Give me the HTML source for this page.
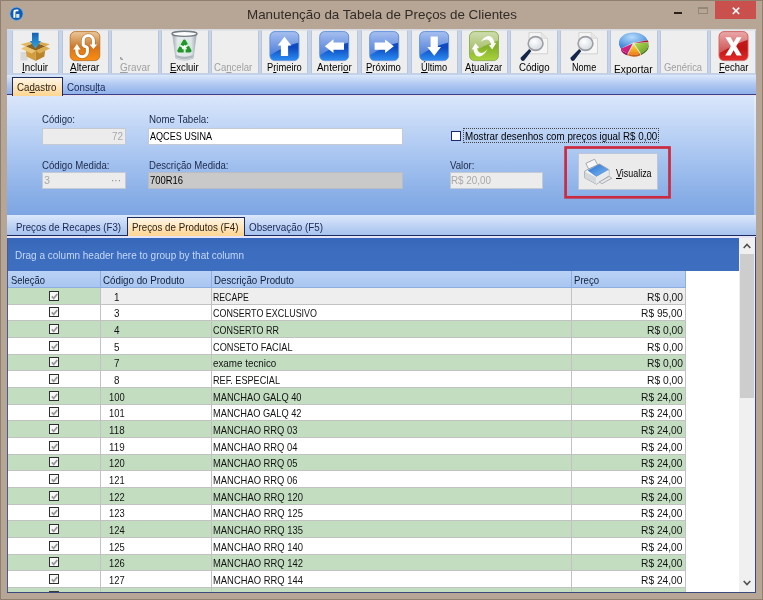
<!DOCTYPE html><html><head><meta charset="utf-8"><title>Manutenção da Tabela de Preços de Clientes</title><style>
html,body{margin:0;padding:0}
body{width:763px;height:600px;overflow:hidden;position:relative;background:#b7a696;font-family:"Liberation Sans",sans-serif;font-size:10.5px}
#w{position:absolute;left:0;top:0;width:763px;height:600px;will-change:transform;filter:blur(.4px)}
.a{position:absolute}
.t{position:absolute;white-space:pre;line-height:14px;height:14px;transform-origin:0 50%}
u{text-decoration:underline;text-underline-offset:.5px;text-decoration-thickness:1px}
svg{position:absolute;overflow:visible}
</style></head><body><div id="w"><div class="a" style="left:0px;top:0px;width:763px;height:600px;box-sizing:border-box;border:1px solid #8e7f6e"></div><span class="t" style="left:246.5px;top:8.3px;font-size:13.6px;color:#322c26;transform:scaleX(0.9851);">Manutenção da Tabela de Preços de Clientes</span><svg style="left:0;top:0" width="30" height="28" viewBox="0 0 30 28"><circle cx="16.5" cy="13.8" r="6.6" fill="#0d5db6" stroke="#7fb2e4" stroke-opacity=".7" stroke-width="1"/><path d="M13.4 17.8V12Q13.4 9.6 16.2 9.6H18.4V11.3H16.4Q15.4 11.3 15.4 12.4V17.8z" fill="#fff"/><rect x="16.2" y="14" width="3.2" height="3.8" fill="#d2e8fa"/></svg><div class="a" style="left:674px;top:12px;width:8px;height:2px;background:#2b2118"></div><div class="a" style="left:698px;top:7px;width:10px;height:7px;box-sizing:border-box;border:1px solid #93877a;border-top-width:2px"></div><div class="a" style="left:715px;top:1px;width:41px;height:18px;background:#c9504d"></div><svg style="left:732px;top:7px" width="8" height="8" viewBox="0 0 8 8"><path d="M0.8 0.6L7.2 7M7.2 0.6L0.8 7" stroke="#fff" stroke-width="1.5"/></svg><div class="a" style="left:7px;top:29px;width:749px;height:46px;background:linear-gradient(#c8d4e8,#c2d2ec)"></div><div class="a" style="left:7px;top:29px;width:749px;height:1px;background:#d9dbe0"></div><div class="a" style="left:12px;top:30px;width:47px;height:44px;box-sizing:border-box;background:#eeeeee;border:1px solid #b9c5d8;border-top-color:#e2e4e8;border-bottom-color:#c6d0e0"></div><span class="t" style="left:21.7px;top:61.2px;font-size:10.2px;color:#000;transform:scaleX(0.9594);"><u>I</u>ncluir</span><div class="a" style="left:62px;top:30px;width:47px;height:44px;box-sizing:border-box;background:#eeeeee;border:1px solid #b9c5d8;border-top-color:#e2e4e8;border-bottom-color:#c6d0e0"></div><span class="t" style="left:70.2px;top:61.2px;font-size:10.2px;color:#000;transform:scaleX(0.9795);"><u>A</u>lterar</span><div class="a" style="left:111px;top:30px;width:48px;height:44px;box-sizing:border-box;background:#eeeeee;border:1px solid #b9c5d8;border-top-color:#e2e4e8;border-bottom-color:#c6d0e0"></div><span class="t" style="left:119.6px;top:61.2px;font-size:10.2px;color:#a0a0a0;transform:scaleX(0.9725);"><u>G</u>ravar</span><div class="a" style="left:161px;top:30px;width:48px;height:44px;box-sizing:border-box;background:#eeeeee;border:1px solid #b9c5d8;border-top-color:#e2e4e8;border-bottom-color:#c6d0e0"></div><span class="t" style="left:170.0px;top:61.2px;font-size:10.2px;color:#000;transform:scaleX(0.9353);"><u>E</u>xcluir</span><div class="a" style="left:211px;top:30px;width:48px;height:44px;box-sizing:border-box;background:#eeeeee;border:1px solid #b9c5d8;border-top-color:#e2e4e8;border-bottom-color:#c6d0e0"></div><span class="t" style="left:214.3px;top:61.2px;font-size:10.2px;color:#a0a0a0;transform:scaleX(0.9388);">Ca<u>n</u>celar</span><div class="a" style="left:261px;top:30px;width:47px;height:44px;box-sizing:border-box;background:#eeeeee;border:1px solid #b9c5d8;border-top-color:#e2e4e8;border-bottom-color:#c6d0e0"></div><span class="t" style="left:266.6px;top:61.2px;font-size:10.2px;color:#000;transform:scaleX(0.9169);">P<u>r</u>imeiro</span><div class="a" style="left:311px;top:30px;width:47px;height:44px;box-sizing:border-box;background:#eeeeee;border:1px solid #b9c5d8;border-top-color:#e2e4e8;border-bottom-color:#c6d0e0"></div><span class="t" style="left:317.0px;top:61.2px;font-size:10.2px;color:#000;transform:scaleX(0.9747);">Anteri<u>o</u>r</span><div class="a" style="left:361px;top:30px;width:47px;height:44px;box-sizing:border-box;background:#eeeeee;border:1px solid #b9c5d8;border-top-color:#e2e4e8;border-bottom-color:#c6d0e0"></div><span class="t" style="left:366.0px;top:61.2px;font-size:10.2px;color:#000;transform:scaleX(0.9338);"><u>P</u>róximo</span><div class="a" style="left:411px;top:30px;width:47px;height:44px;box-sizing:border-box;background:#eeeeee;border:1px solid #b9c5d8;border-top-color:#e2e4e8;border-bottom-color:#c6d0e0"></div><span class="t" style="left:420.8px;top:61.2px;font-size:10.2px;color:#000;transform:scaleX(0.9074);"><u>Ú</u>ltimo</span><div class="a" style="left:461px;top:30px;width:47px;height:44px;box-sizing:border-box;background:#eeeeee;border:1px solid #b9c5d8;border-top-color:#e2e4e8;border-bottom-color:#c6d0e0"></div><span class="t" style="left:464.5px;top:61.2px;font-size:10.2px;color:#000;transform:scaleX(0.9406);">A<u>t</u>ualizar</span><div class="a" style="left:510px;top:30px;width:48px;height:44px;box-sizing:border-box;background:#eeeeee;border:1px solid #b9c5d8;border-top-color:#e2e4e8;border-bottom-color:#c6d0e0"></div><span class="t" style="left:518.5px;top:61.2px;font-size:10.2px;color:#000;transform:scaleX(0.9475);">Código</span><div class="a" style="left:560px;top:30px;width:48px;height:44px;box-sizing:border-box;background:#eeeeee;border:1px solid #b9c5d8;border-top-color:#e2e4e8;border-bottom-color:#c6d0e0"></div><span class="t" style="left:571.5px;top:61.2px;font-size:10.2px;color:#000;transform:scaleX(0.8901);">Nome</span><div class="a" style="left:610px;top:30px;width:48px;height:44px;box-sizing:border-box;background:#eeeeee;border:1px solid #b9c5d8;border-top-color:#e2e4e8;border-bottom-color:#c6d0e0"></div><span class="t" style="left:613.6px;top:63.1px;font-size:10.2px;color:#000;transform:scaleX(1.0022);">Exportar</span><div class="a" style="left:660px;top:30px;width:48px;height:44px;box-sizing:border-box;background:#eeeeee;border:1px solid #b9c5d8;border-top-color:#e2e4e8;border-bottom-color:#c6d0e0"></div><span class="t" style="left:663.9px;top:61.2px;font-size:10.2px;color:#a0a0a0;transform:scaleX(0.9215);">Genérica</span><div class="a" style="left:710px;top:30px;width:46px;height:44px;box-sizing:border-box;background:#eeeeee;border:1px solid #b9c5d8;border-top-color:#e2e4e8;border-bottom-color:#c6d0e0"></div><span class="t" style="left:718.7px;top:61.2px;font-size:10.2px;color:#000;transform:scaleX(0.9237);"><u>F</u>echar</span><div class="a" style="left:7px;top:75px;width:749px;height:19px;background:linear-gradient(#dce8fb,#b4cbf3 45%,#8fb1ea)"></div><div class="a" style="left:7px;top:94px;width:749px;height:1px;background:#36408a"></div><span class="t" style="left:67.0px;top:80.6px;font-size:10.2px;color:#1a2654;transform:scaleX(0.9573);">Consu<u>l</u>ta</span><div class="a" style="left:7px;top:95px;width:749px;height:120px;background:linear-gradient(#dbe7fb,#c1d6f6 26%,#a7c4f0 52%,#8fb3e9 77%,#7da5e2)"></div><div class="a" style="left:7px;top:95px;width:749px;height:1px;background:#eadfe8"></div><div class="a" style="left:12px;top:77px;width:51px;height:19px;box-sizing:border-box;border:1px solid #1c2a5e;border-bottom:none;background:linear-gradient(#fff6e6,#ffd591)"></div><span class="t" style="left:17.0px;top:80.6px;font-size:10.2px;color:#2a2418;transform:scaleX(0.9550);">Ca<u>d</u>astro</span><span class="t" style="left:42.0px;top:113.0px;font-size:10.2px;color:#1c2a4a;transform:scaleX(0.9395);">Código:</span><span class="t" style="left:148.5px;top:113.0px;font-size:10.2px;color:#1c2a4a;transform:scaleX(0.9574);">Nome Tabela:</span><span class="t" style="left:42.0px;top:158.5px;font-size:10.2px;color:#1c2a4a;transform:scaleX(0.9459);">Código Medida:</span><span class="t" style="left:148.5px;top:158.5px;font-size:10.2px;color:#1c2a4a;transform:scaleX(0.9422);">Descrição Medida:</span><span class="t" style="left:450.0px;top:158.5px;font-size:10.2px;color:#1c2a4a;transform:scaleX(0.9474);">Valor:</span><div class="a" style="left:42px;top:128px;width:84px;height:17px;box-sizing:border-box;background:#ececec;border:1px solid #c4cad4"></div><span class="t" style="left:112.0px;top:130.2px;font-size:10.2px;color:#a8a8a8;transform:scaleX(0.9697);">72</span><div class="a" style="left:148px;top:128px;width:255px;height:17px;box-sizing:border-box;background:#fff;border:1px solid #c4cad4"></div><span class="t" style="left:150.0px;top:130.1px;font-size:10.2px;color:#000;transform:scaleX(0.8903);">AQCES USINA</span><div class="a" style="left:42px;top:172px;width:84px;height:17px;box-sizing:border-box;background:#ececec;border:1px solid #c4cad4"></div><span class="t" style="left:44.0px;top:174.3px;font-size:10.2px;color:#a8a8a8;transform:scaleX(1.0579);">3</span><span class="t" style="left:111.0px;top:173.9px;font-size:10.2px;color:#8a8a8a;transform:scaleX(0.9816);">···</span><div class="a" style="left:148px;top:172px;width:255px;height:17px;box-sizing:border-box;background:#c9c9c9;border:1px solid #b8bcc4"></div><span class="t" style="left:150.0px;top:174.3px;font-size:10.2px;color:#000;transform:scaleX(0.9247);">700R16</span><div class="a" style="left:450px;top:172px;width:93px;height:17px;box-sizing:border-box;background:#ececec;border:1px solid #c4cad4"></div><span class="t" style="left:451.0px;top:174.3px;font-size:10.2px;color:#a8a8a8;transform:scaleX(0.9671);">R$ 20,00</span><div class="a" style="left:451px;top:131px;width:10px;height:10px;box-sizing:border-box;background:#fff;border:1px solid #1c2a6a"></div><div class="a" style="left:463px;top:128px;width:196px;height:15px;box-sizing:border-box;border:1px dotted #444"></div><span class="t" style="left:464.5px;top:130.3px;font-size:10.2px;color:#000;transform:scaleX(0.9620);">Mostrar desenhos com preços igual R$ 0,00</span><svg style="left:0;top:0" width="763" height="220" viewBox="0 0 763 220"><rect x="565.6" y="147.5" width="103.9" height="49.8" fill="none" stroke="#cb2a40" stroke-width="2.7"/></svg><div class="a" style="left:578px;top:153px;width:80px;height:37px;box-sizing:border-box;background:#ebebeb;border:1px solid #bcc6d8"></div><span class="t" style="left:616.3px;top:166.8px;font-size:10.2px;color:#000;transform:scaleX(0.8766);"><u>V</u>isualiza</span><div class="a" style="left:754px;top:96px;width:2px;height:119px;background:rgba(255,255,255,.3)"></div><div class="a" style="left:7px;top:215px;width:749px;height:20px;background:linear-gradient(#dbe7fb,#a6c2ee)"></div><div class="a" style="left:7px;top:235px;width:749px;height:1px;background:#1c2a5e"></div><div class="a" style="left:7px;top:236px;width:749px;height:2px;background:#e4e4f8"></div><div class="a" style="left:127px;top:217px;width:118px;height:19px;box-sizing:border-box;border:1px solid #1c2a5e;border-bottom:none;background:linear-gradient(#fff6e6,#ffd591)"></div><span class="t" style="left:16.0px;top:220.9px;font-size:10.2px;color:#1a2654;transform:scaleX(0.9509);">Preços de Recapes (F3)</span><span class="t" style="left:132.2px;top:220.9px;font-size:10.2px;color:#2a2418;transform:scaleX(0.9587);">Preços de Produtos (F4)</span><span class="t" style="left:249.0px;top:220.9px;font-size:10.2px;color:#1a2654;transform:scaleX(0.9681);">Observação (F5)</span><div class="a" style="left:7px;top:238px;width:749px;height:355px;background:#fff"></div><div class="a" style="left:7px;top:238px;width:732px;height:33px;background:linear-gradient(#3766b8,#3c6dbf 40%,#3d6ec0)"></div><span class="t" style="left:15.0px;top:248.9px;font-size:10.2px;color:#c5d8f8;transform:scaleX(0.9815);">Drag a column header here to group by that column</span><div class="a" style="left:7px;top:271px;width:94px;height:17px;box-sizing:border-box;background:linear-gradient(#b9d1f5,#a9c6f1);border-right:1px solid #8eaee0;border-bottom:1px solid #8eaee0"></div><span class="t" style="left:10.5px;top:273.9px;font-size:10.2px;color:#10203a;transform:scaleX(0.9232);">Seleção</span><div class="a" style="left:101px;top:271px;width:111px;height:17px;box-sizing:border-box;background:linear-gradient(#b9d1f5,#a9c6f1);border-right:1px solid #8eaee0;border-bottom:1px solid #8eaee0"></div><span class="t" style="left:103.0px;top:273.9px;font-size:10.2px;color:#10203a;transform:scaleX(0.9592);">Código do Produto</span><div class="a" style="left:212px;top:271px;width:360px;height:17px;box-sizing:border-box;background:linear-gradient(#b9d1f5,#a9c6f1);border-right:1px solid #8eaee0;border-bottom:1px solid #8eaee0"></div><span class="t" style="left:213.5px;top:273.9px;font-size:10.2px;color:#10203a;transform:scaleX(0.9545);">Descrição Produto</span><div class="a" style="left:572px;top:271px;width:114px;height:17px;box-sizing:border-box;background:linear-gradient(#b9d1f5,#a9c6f1);border-right:1px solid #8eaee0;border-bottom:1px solid #8eaee0"></div><span class="t" style="left:574.0px;top:273.9px;font-size:10.2px;color:#10203a;transform:scaleX(0.9390);">Preço</span><div class="a" style="left:7px;top:288px;width:679px;height:17px;background:#c3ddc1"></div><div class="a" style="left:101px;top:288px;width:585px;height:17px;background:#eeeeee"></div><div class="a" style="left:7px;top:304px;width:679px;height:1px;background:#c2c2c2"></div><div class="a" style="left:49px;top:291px;width:10px;height:10px;box-sizing:border-box;border:1px solid #2e2e2e;background:#f8f8f8"></div><svg style="left:50.5px;top:293px" width="7" height="7" viewBox="0 0 7 7"><path d="M0.8 3.4L2.7 5.4L6.3 1" stroke="#989898" stroke-width="1.7" fill="none"/></svg><span class="t" style="left:114.0px;top:290.7px;font-size:10.2px;color:#141414;transform:scaleX(0.9697);">1</span><span class="t" style="left:212.8px;top:290.7px;font-size:10.2px;color:#141414;transform:scaleX(0.8543);">RECAPE</span><span class="t" style="left:646.8px;top:290.7px;font-size:10.2px;color:#141414;transform:scaleX(1.0088);">R$ 0,00</span><div class="a" style="left:7px;top:305px;width:679px;height:16px;background:#fff"></div><div class="a" style="left:7px;top:320px;width:679px;height:1px;background:#c2c2c2"></div><div class="a" style="left:49px;top:307px;width:10px;height:10px;box-sizing:border-box;border:1px solid #2e2e2e;background:#f8f8f8"></div><svg style="left:50.5px;top:309px" width="7" height="7" viewBox="0 0 7 7"><path d="M0.8 3.4L2.7 5.4L6.3 1" stroke="#989898" stroke-width="1.7" fill="none"/></svg><span class="t" style="left:114.0px;top:307.4px;font-size:10.2px;color:#141414;transform:scaleX(0.9697);">3</span><span class="t" style="left:212.8px;top:307.4px;font-size:10.2px;color:#141414;transform:scaleX(0.8775);">CONSERTO EXCLUSIVO</span><span class="t" style="left:641.3px;top:307.4px;font-size:10.2px;color:#141414;transform:scaleX(1.0034);">R$ 95,00</span><div class="a" style="left:7px;top:321px;width:679px;height:17px;background:#c3ddc1"></div><div class="a" style="left:7px;top:337px;width:679px;height:1px;background:#c2c2c2"></div><div class="a" style="left:49px;top:324px;width:10px;height:10px;box-sizing:border-box;border:1px solid #2e2e2e;background:#f8f8f8"></div><svg style="left:50.5px;top:326px" width="7" height="7" viewBox="0 0 7 7"><path d="M0.8 3.4L2.7 5.4L6.3 1" stroke="#989898" stroke-width="1.7" fill="none"/></svg><span class="t" style="left:114.0px;top:324.0px;font-size:10.2px;color:#141414;transform:scaleX(0.9697);">4</span><span class="t" style="left:212.8px;top:324.0px;font-size:10.2px;color:#141414;transform:scaleX(0.8809);">CONSERTO RR</span><span class="t" style="left:646.8px;top:324.0px;font-size:10.2px;color:#141414;transform:scaleX(1.0088);">R$ 0,00</span><div class="a" style="left:7px;top:338px;width:679px;height:17px;background:#fff"></div><div class="a" style="left:7px;top:354px;width:679px;height:1px;background:#c2c2c2"></div><div class="a" style="left:49px;top:341px;width:10px;height:10px;box-sizing:border-box;border:1px solid #2e2e2e;background:#f8f8f8"></div><svg style="left:50.5px;top:343px" width="7" height="7" viewBox="0 0 7 7"><path d="M0.8 3.4L2.7 5.4L6.3 1" stroke="#989898" stroke-width="1.7" fill="none"/></svg><span class="t" style="left:114.0px;top:340.7px;font-size:10.2px;color:#141414;transform:scaleX(0.9697);">5</span><span class="t" style="left:212.8px;top:340.7px;font-size:10.2px;color:#141414;transform:scaleX(0.9021);">CONSETO FACIAL</span><span class="t" style="left:646.8px;top:340.7px;font-size:10.2px;color:#141414;transform:scaleX(1.0088);">R$ 0,00</span><div class="a" style="left:7px;top:355px;width:679px;height:16px;background:#c3ddc1"></div><div class="a" style="left:7px;top:370px;width:679px;height:1px;background:#c2c2c2"></div><div class="a" style="left:49px;top:357px;width:10px;height:10px;box-sizing:border-box;border:1px solid #2e2e2e;background:#f8f8f8"></div><svg style="left:50.5px;top:359px" width="7" height="7" viewBox="0 0 7 7"><path d="M0.8 3.4L2.7 5.4L6.3 1" stroke="#989898" stroke-width="1.7" fill="none"/></svg><span class="t" style="left:114.0px;top:357.4px;font-size:10.2px;color:#141414;transform:scaleX(0.9697);">7</span><span class="t" style="left:212.8px;top:357.4px;font-size:10.2px;color:#141414;transform:scaleX(0.9637);">exame tecnico</span><span class="t" style="left:646.8px;top:357.4px;font-size:10.2px;color:#141414;transform:scaleX(1.0088);">R$ 0,00</span><div class="a" style="left:7px;top:371px;width:679px;height:17px;background:#fff"></div><div class="a" style="left:7px;top:387px;width:679px;height:1px;background:#c2c2c2"></div><div class="a" style="left:49px;top:374px;width:10px;height:10px;box-sizing:border-box;border:1px solid #2e2e2e;background:#f8f8f8"></div><svg style="left:50.5px;top:376px" width="7" height="7" viewBox="0 0 7 7"><path d="M0.8 3.4L2.7 5.4L6.3 1" stroke="#989898" stroke-width="1.7" fill="none"/></svg><span class="t" style="left:114.0px;top:374.0px;font-size:10.2px;color:#141414;transform:scaleX(0.9697);">8</span><span class="t" style="left:212.8px;top:374.0px;font-size:10.2px;color:#141414;transform:scaleX(0.8965);">REF. ESPECIAL</span><span class="t" style="left:646.8px;top:374.0px;font-size:10.2px;color:#141414;transform:scaleX(1.0088);">R$ 0,00</span><div class="a" style="left:7px;top:388px;width:679px;height:17px;background:#c3ddc1"></div><div class="a" style="left:7px;top:404px;width:679px;height:1px;background:#c2c2c2"></div><div class="a" style="left:49px;top:391px;width:10px;height:10px;box-sizing:border-box;border:1px solid #2e2e2e;background:#f8f8f8"></div><svg style="left:50.5px;top:393px" width="7" height="7" viewBox="0 0 7 7"><path d="M0.8 3.4L2.7 5.4L6.3 1" stroke="#989898" stroke-width="1.7" fill="none"/></svg><span class="t" style="left:108.9px;top:390.7px;font-size:10.2px;color:#141414;transform:scaleX(0.9176);">100</span><span class="t" style="left:212.8px;top:390.7px;font-size:10.2px;color:#141414;transform:scaleX(0.9089);">MANCHAO GALQ 40</span><span class="t" style="left:641.3px;top:390.7px;font-size:10.2px;color:#141414;transform:scaleX(1.0034);">R$ 24,00</span><div class="a" style="left:7px;top:405px;width:679px;height:16px;background:#fff"></div><div class="a" style="left:7px;top:420px;width:679px;height:1px;background:#c2c2c2"></div><div class="a" style="left:49px;top:407px;width:10px;height:10px;box-sizing:border-box;border:1px solid #2e2e2e;background:#f8f8f8"></div><svg style="left:50.5px;top:409px" width="7" height="7" viewBox="0 0 7 7"><path d="M0.8 3.4L2.7 5.4L6.3 1" stroke="#989898" stroke-width="1.7" fill="none"/></svg><span class="t" style="left:108.9px;top:407.3px;font-size:10.2px;color:#141414;transform:scaleX(0.9176);">101</span><span class="t" style="left:212.8px;top:407.3px;font-size:10.2px;color:#141414;transform:scaleX(0.9089);">MANCHAO GALQ 42</span><span class="t" style="left:641.3px;top:407.3px;font-size:10.2px;color:#141414;transform:scaleX(1.0034);">R$ 24,00</span><div class="a" style="left:7px;top:421px;width:679px;height:17px;background:#c3ddc1"></div><div class="a" style="left:7px;top:437px;width:679px;height:1px;background:#c2c2c2"></div><div class="a" style="left:49px;top:424px;width:10px;height:10px;box-sizing:border-box;border:1px solid #2e2e2e;background:#f8f8f8"></div><svg style="left:50.5px;top:426px" width="7" height="7" viewBox="0 0 7 7"><path d="M0.8 3.4L2.7 5.4L6.3 1" stroke="#989898" stroke-width="1.7" fill="none"/></svg><span class="t" style="left:108.9px;top:424.0px;font-size:10.2px;color:#141414;transform:scaleX(0.9600);">118</span><span class="t" style="left:212.8px;top:424.0px;font-size:10.2px;color:#141414;transform:scaleX(0.9204);">MANCHAO RRQ 03</span><span class="t" style="left:641.3px;top:424.0px;font-size:10.2px;color:#141414;transform:scaleX(1.0034);">R$ 24,00</span><div class="a" style="left:7px;top:438px;width:679px;height:17px;background:#fff"></div><div class="a" style="left:7px;top:454px;width:679px;height:1px;background:#c2c2c2"></div><div class="a" style="left:49px;top:441px;width:10px;height:10px;box-sizing:border-box;border:1px solid #2e2e2e;background:#f8f8f8"></div><svg style="left:50.5px;top:443px" width="7" height="7" viewBox="0 0 7 7"><path d="M0.8 3.4L2.7 5.4L6.3 1" stroke="#989898" stroke-width="1.7" fill="none"/></svg><span class="t" style="left:108.9px;top:440.7px;font-size:10.2px;color:#141414;transform:scaleX(0.9600);">119</span><span class="t" style="left:212.8px;top:440.7px;font-size:10.2px;color:#141414;transform:scaleX(0.9204);">MANCHAO RRQ 04</span><span class="t" style="left:641.3px;top:440.7px;font-size:10.2px;color:#141414;transform:scaleX(1.0034);">R$ 24,00</span><div class="a" style="left:7px;top:455px;width:679px;height:16px;background:#c3ddc1"></div><div class="a" style="left:7px;top:470px;width:679px;height:1px;background:#c2c2c2"></div><div class="a" style="left:49px;top:457px;width:10px;height:10px;box-sizing:border-box;border:1px solid #2e2e2e;background:#f8f8f8"></div><svg style="left:50.5px;top:459px" width="7" height="7" viewBox="0 0 7 7"><path d="M0.8 3.4L2.7 5.4L6.3 1" stroke="#989898" stroke-width="1.7" fill="none"/></svg><span class="t" style="left:108.9px;top:457.3px;font-size:10.2px;color:#141414;transform:scaleX(0.9176);">120</span><span class="t" style="left:212.8px;top:457.3px;font-size:10.2px;color:#141414;transform:scaleX(0.9204);">MANCHAO RRQ 05</span><span class="t" style="left:641.3px;top:457.3px;font-size:10.2px;color:#141414;transform:scaleX(1.0034);">R$ 24,00</span><div class="a" style="left:7px;top:471px;width:679px;height:17px;background:#fff"></div><div class="a" style="left:7px;top:487px;width:679px;height:1px;background:#c2c2c2"></div><div class="a" style="left:49px;top:474px;width:10px;height:10px;box-sizing:border-box;border:1px solid #2e2e2e;background:#f8f8f8"></div><svg style="left:50.5px;top:476px" width="7" height="7" viewBox="0 0 7 7"><path d="M0.8 3.4L2.7 5.4L6.3 1" stroke="#989898" stroke-width="1.7" fill="none"/></svg><span class="t" style="left:108.9px;top:474.0px;font-size:10.2px;color:#141414;transform:scaleX(0.9176);">121</span><span class="t" style="left:212.8px;top:474.0px;font-size:10.2px;color:#141414;transform:scaleX(0.9204);">MANCHAO RRQ 06</span><span class="t" style="left:641.3px;top:474.0px;font-size:10.2px;color:#141414;transform:scaleX(1.0034);">R$ 24,00</span><div class="a" style="left:7px;top:488px;width:679px;height:17px;background:#c3ddc1"></div><div class="a" style="left:7px;top:504px;width:679px;height:1px;background:#c2c2c2"></div><div class="a" style="left:49px;top:491px;width:10px;height:10px;box-sizing:border-box;border:1px solid #2e2e2e;background:#f8f8f8"></div><svg style="left:50.5px;top:493px" width="7" height="7" viewBox="0 0 7 7"><path d="M0.8 3.4L2.7 5.4L6.3 1" stroke="#989898" stroke-width="1.7" fill="none"/></svg><span class="t" style="left:108.9px;top:490.6px;font-size:10.2px;color:#141414;transform:scaleX(0.9176);">122</span><span class="t" style="left:212.8px;top:490.6px;font-size:10.2px;color:#141414;transform:scaleX(0.9243);">MANCHAO RRQ 120</span><span class="t" style="left:641.3px;top:490.6px;font-size:10.2px;color:#141414;transform:scaleX(1.0034);">R$ 24,00</span><div class="a" style="left:7px;top:505px;width:679px;height:16px;background:#fff"></div><div class="a" style="left:7px;top:520px;width:679px;height:1px;background:#c2c2c2"></div><div class="a" style="left:49px;top:507px;width:10px;height:10px;box-sizing:border-box;border:1px solid #2e2e2e;background:#f8f8f8"></div><svg style="left:50.5px;top:509px" width="7" height="7" viewBox="0 0 7 7"><path d="M0.8 3.4L2.7 5.4L6.3 1" stroke="#989898" stroke-width="1.7" fill="none"/></svg><span class="t" style="left:108.9px;top:507.3px;font-size:10.2px;color:#141414;transform:scaleX(0.9176);">123</span><span class="t" style="left:212.8px;top:507.3px;font-size:10.2px;color:#141414;transform:scaleX(0.9243);">MANCHAO RRQ 125</span><span class="t" style="left:641.3px;top:507.3px;font-size:10.2px;color:#141414;transform:scaleX(1.0034);">R$ 24,00</span><div class="a" style="left:7px;top:521px;width:679px;height:17px;background:#c3ddc1"></div><div class="a" style="left:7px;top:537px;width:679px;height:1px;background:#c2c2c2"></div><div class="a" style="left:49px;top:524px;width:10px;height:10px;box-sizing:border-box;border:1px solid #2e2e2e;background:#f8f8f8"></div><svg style="left:50.5px;top:526px" width="7" height="7" viewBox="0 0 7 7"><path d="M0.8 3.4L2.7 5.4L6.3 1" stroke="#989898" stroke-width="1.7" fill="none"/></svg><span class="t" style="left:108.9px;top:524.0px;font-size:10.2px;color:#141414;transform:scaleX(0.9176);">124</span><span class="t" style="left:212.8px;top:524.0px;font-size:10.2px;color:#141414;transform:scaleX(0.9243);">MANCHAO RRQ 135</span><span class="t" style="left:641.3px;top:524.0px;font-size:10.2px;color:#141414;transform:scaleX(1.0034);">R$ 24,00</span><div class="a" style="left:7px;top:538px;width:679px;height:17px;background:#fff"></div><div class="a" style="left:7px;top:554px;width:679px;height:1px;background:#c2c2c2"></div><div class="a" style="left:49px;top:541px;width:10px;height:10px;box-sizing:border-box;border:1px solid #2e2e2e;background:#f8f8f8"></div><svg style="left:50.5px;top:543px" width="7" height="7" viewBox="0 0 7 7"><path d="M0.8 3.4L2.7 5.4L6.3 1" stroke="#989898" stroke-width="1.7" fill="none"/></svg><span class="t" style="left:108.9px;top:540.6px;font-size:10.2px;color:#141414;transform:scaleX(0.9176);">125</span><span class="t" style="left:212.8px;top:540.6px;font-size:10.2px;color:#141414;transform:scaleX(0.9243);">MANCHAO RRQ 140</span><span class="t" style="left:641.3px;top:540.6px;font-size:10.2px;color:#141414;transform:scaleX(1.0034);">R$ 24,00</span><div class="a" style="left:7px;top:555px;width:679px;height:16px;background:#c3ddc1"></div><div class="a" style="left:7px;top:570px;width:679px;height:1px;background:#c2c2c2"></div><div class="a" style="left:49px;top:557px;width:10px;height:10px;box-sizing:border-box;border:1px solid #2e2e2e;background:#f8f8f8"></div><svg style="left:50.5px;top:559px" width="7" height="7" viewBox="0 0 7 7"><path d="M0.8 3.4L2.7 5.4L6.3 1" stroke="#989898" stroke-width="1.7" fill="none"/></svg><span class="t" style="left:108.9px;top:557.3px;font-size:10.2px;color:#141414;transform:scaleX(0.9176);">126</span><span class="t" style="left:212.8px;top:557.3px;font-size:10.2px;color:#141414;transform:scaleX(0.9243);">MANCHAO RRQ 142</span><span class="t" style="left:641.3px;top:557.3px;font-size:10.2px;color:#141414;transform:scaleX(1.0034);">R$ 24,00</span><div class="a" style="left:7px;top:571px;width:679px;height:17px;background:#fff"></div><div class="a" style="left:7px;top:587px;width:679px;height:1px;background:#c2c2c2"></div><div class="a" style="left:49px;top:574px;width:10px;height:10px;box-sizing:border-box;border:1px solid #2e2e2e;background:#f8f8f8"></div><svg style="left:50.5px;top:576px" width="7" height="7" viewBox="0 0 7 7"><path d="M0.8 3.4L2.7 5.4L6.3 1" stroke="#989898" stroke-width="1.7" fill="none"/></svg><span class="t" style="left:108.9px;top:574.0px;font-size:10.2px;color:#141414;transform:scaleX(0.9176);">127</span><span class="t" style="left:212.8px;top:574.0px;font-size:10.2px;color:#141414;transform:scaleX(0.9243);">MANCHAO RRQ 144</span><span class="t" style="left:641.3px;top:574.0px;font-size:10.2px;color:#141414;transform:scaleX(1.0034);">R$ 24,00</span><div class="a" style="left:7px;top:588px;width:679px;height:4px;background:#c3ddc1"></div><div class="a" style="left:49px;top:591px;width:10px;height:1px;background:#3a3a3a"></div><div class="a" style="left:100px;top:288px;width:1px;height:304px;background:#c2c2c2"></div><div class="a" style="left:211px;top:288px;width:1px;height:304px;background:#c2c2c2"></div><div class="a" style="left:571px;top:288px;width:1px;height:304px;background:#c2c2c2"></div><div class="a" style="left:685px;top:288px;width:1px;height:304px;background:#c2c2c2"></div><div class="a" style="left:7px;top:238px;width:1px;height:355px;background:#4a5a8a"></div><div class="a" style="left:739px;top:238px;width:16px;height:354px;background:#f0f0f0"></div><div class="a" style="left:740px;top:254px;width:14px;height:144px;background:#cdcdcd"></div><svg style="left:743px;top:243px" width="8" height="6" viewBox="0 0 8 6"><path d="M0.7 5L4 1.5L7.3 5" stroke="#505050" stroke-width="1.6" fill="none"/></svg><svg style="left:743px;top:580px" width="8" height="6" viewBox="0 0 8 6"><path d="M0.7 1L4 4.5L7.3 1" stroke="#505050" stroke-width="1.6" fill="none"/></svg><div class="a" style="left:755px;top:237px;width:1px;height:356px;background:#3a4a7c"></div><div class="a" style="left:7px;top:592px;width:749px;height:1px;background:#3a4a7c"></div><svg style="left:0;top:0" width="763" height="600" viewBox="0 0 763 600"><defs>
<linearGradient id="gArr" x1="0" y1="0" x2="0" y2="1"><stop offset="0" stop-color="#1560b4"/><stop offset="1" stop-color="#2fa6e6"/></linearGradient>
<linearGradient id="gOr" x1="0" y1="0" x2="0" y2="1"><stop offset="0" stop-color="#ecc89c"/><stop offset=".46" stop-color="#cc843a"/><stop offset=".54" stop-color="#d8741a"/><stop offset="1" stop-color="#f98e14"/></linearGradient>
<linearGradient id="gBl" x1="0" y1="0" x2="0" y2="1"><stop offset="0" stop-color="#1a55c8"/><stop offset=".55" stop-color="#0d49c0"/><stop offset="1" stop-color="#2c8df2"/></linearGradient>
<linearGradient id="gBlG" x1="0" y1="0" x2="0" y2="1"><stop offset="0" stop-color="#b4c9f3"/><stop offset="1" stop-color="#4f80dc"/></linearGradient>
<linearGradient id="gGr" x1="0" y1="0" x2="0" y2="1"><stop offset="0" stop-color="#93b545"/><stop offset=".55" stop-color="#86b22a"/><stop offset="1" stop-color="#a9d23e"/></linearGradient>
<linearGradient id="gGrG" x1="0" y1="0" x2="0" y2="1"><stop offset="0" stop-color="#d3dfb6"/><stop offset="1" stop-color="#9db85a"/></linearGradient>
<linearGradient id="gRd" x1="0" y1="0" x2="0" y2="1"><stop offset="0" stop-color="#c42222"/><stop offset=".6" stop-color="#c11414"/><stop offset="1" stop-color="#e42a2a"/></linearGradient>
<linearGradient id="gRdG" x1="0" y1="0" x2="0" y2="1"><stop offset="0" stop-color="#eeb4b4"/><stop offset="1" stop-color="#cf5252"/></linearGradient>
<radialGradient id="gLens" cx=".4" cy=".35" r=".75"><stop offset="0" stop-color="#ffffff"/><stop offset="1" stop-color="#cfd5dc"/></radialGradient>
<linearGradient id="gBin" x1="0" y1="0" x2="1" y2="0"><stop offset="0" stop-color="#a4aeb6"/><stop offset=".22" stop-color="#e6ebee"/><stop offset=".78" stop-color="#dfe5e9"/><stop offset="1" stop-color="#9fa9b2"/></linearGradient>
<radialGradient id="gPieB" cx=".45" cy=".3" r=".7"><stop offset="0" stop-color="#b5dcfa"/><stop offset="1" stop-color="#3f86dc"/></radialGradient>
<linearGradient id="gPieY" x1="0" y1="0" x2="0" y2="1"><stop offset="0" stop-color="#fbe22a"/><stop offset="1" stop-color="#ee7a1c"/></linearGradient>
<linearGradient id="gPieG" x1="0" y1="0" x2="1" y2="1"><stop offset="0" stop-color="#b9dc55"/><stop offset="1" stop-color="#5f9a22"/></linearGradient>
<linearGradient id="gPrB" x1="0" y1="0" x2="1" y2="1"><stop offset="0" stop-color="#2a72d4"/><stop offset="1" stop-color="#7db9f0"/></linearGradient>
<clipPath id="cSq"><rect x="0" y="0" width="29" height="29" rx="5"/></clipPath>
</defs><g>
<path d="M20.6 52h7v8.4h-7z" fill="#d2d2d2" opacity=".8"/>
<path d="M25.5 46.2L35.3 42.6L45.6 46.2L35.6 50.8z" fill="#8e601c"/>
<path d="M25.5 46.2L35.6 50.8V61L26.6 56.6z" fill="#d39c3e"/>
<path d="M35.6 50.8L45.6 46.2L44.4 56.6L35.6 61z" fill="#b9842a"/>
<path d="M25.5 46.2L20.6 44.2L31.2 41.6L35.3 42.6z" fill="#e3b660"/>
<path d="M45.6 46.2L50 44.2L39.6 41.7L35.3 42.6z" fill="#d9a94e"/>
<path d="M25.5 46.2L35.6 50.8L31.6 53.6L21 48.8z" fill="#ebc474"/>
<path d="M45.6 46.2L35.6 50.8L39.6 53.4L50 48.6z" fill="#dcae52"/>
<path d="M32 32.8h6.6v8.1H41L35.4 48.7L29.9 40.9H32z" fill="url(#gArr)"/>
</g><g transform="translate(70.2,31.6)">
<rect width="29.6" height="29" rx="5" fill="url(#gOr)" stroke="#b9691c" stroke-width=".8"/>
<path d="M6.7 17V19.95a5.25 5.25 0 0 0 10.5 0V16.5C17.2 14.5 13 15.5 13 13V9a5.1 5.1 0 0 1 10.2 0V13.5" fill="none" stroke="#9a4c0c" stroke-opacity=".45" stroke-width="4.4"/>
<path d="M6.7 17V19.95a5.25 5.25 0 0 0 10.5 0V16.5C17.2 14.5 13 15.5 13 13V9a5.1 5.1 0 0 1 10.2 0V13.5" fill="none" stroke="#fff" stroke-width="3.1"/>
<path d="M6.7 12.5L3 17.8H10.4zM23.2 17.3L19.5 12.8H26.9z" fill="#fff"/>
</g><path d="M120.8 57v2.2h2.2" fill="none" stroke="#6c7486" stroke-width=".9"/><g>
<path d="M172.6 34.2L175.8 58.2Q184.5 62.2 193.2 58.2L196.4 34.2z" fill="url(#gBin)" stroke="#a9b3ba" stroke-width=".6"/>
<ellipse cx="184.5" cy="33.8" rx="12.6" ry="2.6" fill="#fbfcfc" stroke="#747b82" stroke-width="1.4"/>
<circle cx="184.4" cy="46.4" r="6.6" fill="#c9f2c9" opacity=".55"/>
<circle cx="184.4" cy="47" r="2.6" fill="#f4fff4"/>
<path d="M185.8 50.8H189.9L184.4 41.2L178.9 50.8z" fill="none" stroke="#21962a" stroke-width="3.3" stroke-linejoin="round" stroke-dasharray="9 2"/>
<path d="M176.4 57.4Q184.5 61 192.6 57.4L192.9 55Q184.5 58.6 176.1 55z" fill="#a2acb4" opacity=".8"/>
</g><g transform="translate(269.9,31.6)"><g clip-path="url(#cSq)"><rect width="29" height="29" fill="url(#gBl)"/>
<path d="M0 0H29V11Q15 14 0 24z" fill="url(#gBlG)" opacity=".92"/></g>
<rect width="29" height="29" rx="5" fill="none" stroke="#5b8fdc" stroke-width=".9"/>
<path transform="rotate(0 14.6 14.6)" d="M14.6 5.1L21.5 13.8H18.2V24.3H11V13.8H7.8z" fill="#fff"/></g><g transform="translate(319.7,31.6)"><g clip-path="url(#cSq)"><rect width="29" height="29" fill="url(#gBl)"/>
<path d="M0 0H29V11Q15 14 0 24z" fill="url(#gBlG)" opacity=".92"/></g>
<rect width="29" height="29" rx="5" fill="none" stroke="#5b8fdc" stroke-width=".9"/>
<path transform="rotate(-90 14.6 14.6)" d="M14.6 5.1L21.5 13.8H18.2V24.3H11V13.8H7.8z" fill="#fff"/></g><g transform="translate(369.7,31.6)"><g clip-path="url(#cSq)"><rect width="29" height="29" fill="url(#gBl)"/>
<path d="M0 0H29V11Q15 14 0 24z" fill="url(#gBlG)" opacity=".92"/></g>
<rect width="29" height="29" rx="5" fill="none" stroke="#5b8fdc" stroke-width=".9"/>
<path transform="rotate(90 14.6 14.6)" d="M14.6 5.1L21.5 13.8H18.2V24.3H11V13.8H7.8z" fill="#fff"/></g><g transform="translate(419.6,31.6)"><g clip-path="url(#cSq)"><rect width="29" height="29" fill="url(#gBl)"/>
<path d="M0 0H29V11Q15 14 0 24z" fill="url(#gBlG)" opacity=".92"/></g>
<rect width="29" height="29" rx="5" fill="none" stroke="#5b8fdc" stroke-width=".9"/>
<path transform="rotate(180 14.6 14.6)" d="M14.6 5.1L21.5 13.8H18.2V24.3H11V13.8H7.8z" fill="#fff"/></g><g transform="translate(469.5,31.6)"><g clip-path="url(#cSq)"><rect width="29" height="29" fill="url(#gGr)"/>
<path d="M0 0H29V9Q15 13 0 23z" fill="url(#gGrG)" opacity=".95"/></g>
<rect width="29" height="29" rx="5" fill="none" stroke="#8bab44" stroke-width=".9"/>
<path d="M11.3 10.2Q14 5.5 18.5 4.4Q23.5 4 25.1 11.6L26.8 11.2L22.7 18L19.5 13.6L21.5 13.2Q20.8 8.2 17.5 8Q14.5 8 11.3 10.2z" fill="#fff" opacity=".96"/>
<path d="M18.2 17.4Q15 23.5 10.5 24.9Q5 25.5 3.9 17.6L2.2 17.9L5.9 11.6L9.7 16L7.6 16.5Q8.2 21 11.6 21.3Q14.6 21.3 18.2 17.4z" fill="#fff" opacity=".96"/>
</g><g transform="translate(0,0)">
<path d="M529 32.6H541.2L547.6 38.4V53.8H529z" fill="#f6f6f6" stroke="#cacaca" stroke-width=".8"/>
<path d="M541.2 32.6V38.4H547.6" fill="#e6e6e6" stroke="#d2d2d2" stroke-width=".6"/>
<path d="M529.3 49L531.4 51.1L524.2 60.6Q522.4 61.4 521.2 60Q520 58.6 520.8 57.6z" fill="#14274a"/>
<ellipse cx="535.6" cy="43.5" rx="7.4" ry="6.9" fill="url(#gLens)" stroke="#9b9fa4" stroke-width="1.6"/>
</g><g transform="translate(49.9,0)">
<path d="M529 32.6H541.2L547.6 38.4V53.8H529z" fill="#f6f6f6" stroke="#cacaca" stroke-width=".8"/>
<path d="M541.2 32.6V38.4H547.6" fill="#e6e6e6" stroke="#d2d2d2" stroke-width=".6"/>
<path d="M529.3 49L531.4 51.1L524.2 60.6Q522.4 61.4 521.2 60Q520 58.6 520.8 57.6z" fill="#14274a"/>
<ellipse cx="535.6" cy="43.5" rx="7.4" ry="6.9" fill="url(#gLens)" stroke="#9b9fa4" stroke-width="1.6"/>
</g><g>
<path d="M619.4 42.6A14.4 10 0 0 0 622 49.6L622.4 47.2z" fill="#2a5faf"/>
<path d="M621.4 48.4Q622.4 51.6 627.7 53.6L627.6 55.6Q622 53.6 621 50z" fill="#9a145c"/>
<path d="M628.4 53.8Q634 56.2 640 53.6L640.2 55.4Q634 57.8 628.2 55.6z" fill="#c8601a"/>
<path d="M640.6 53.4Q648.6 49.8 648.6 43.6L648.8 45.8Q648.6 51.8 640.8 55.2z" fill="#4c7c1a"/>
<path d="M633.2 42.6L647.4 40.2A14.4 10 0 1 0 621.6 48.2z" fill="url(#gPieB)"/>
<path d="M633.6 42.9L647.6 40.2Q648.4 41.2 648.5 42.2z" fill="#a81c3c"/>
<path d="M634.2 43.6L648.6 42.6Q649 49.6 640.8 53.4z" fill="url(#gPieG)"/>
<path d="M633.6 44.2L640 53.8Q634 56.2 628.4 53.9z" fill="url(#gPieY)"/>
<path d="M632.8 43.6L627.7 53.5Q622.4 51.4 621.4 48.4z" fill="#d01f7e"/>
</g><g transform="translate(719,31.6)"><g clip-path="url(#cSq)"><rect width="29.3" height="29" fill="url(#gRd)"/>
<path d="M0 0H29.3V8Q16 12 0 22z" fill="url(#gRdG)" opacity=".92"/></g>
<rect width="29" height="29" rx="5" fill="none" stroke="#d06060" stroke-width=".9"/>
<path d="M6.4 5.6H11.6L14.6 10.8L17.6 5.6H22.6L17.2 14.6L22.8 24H17.6L14.6 18.6L11.6 24H6.2L11.9 14.6z" fill="#fff"/></g><g stroke-linejoin="round">
<path d="M585.8 163.4L594.6 159.2L597.7 165L588.8 169.3z" fill="#f7f7f7" stroke="#8e969e" stroke-width=".8"/>
<path d="M584.6 171.4L588.2 169.2L599.6 164L608.9 169.6V175.6L596.5 184.2L584.8 177.8z" fill="#f4f4f4" stroke="#8e969e" stroke-width=".8"/>
<path d="M584.9 171.8L596.4 177.6V184L585 177.8z" fill="#d4d7db"/>
<path d="M596.4 177.6L608.8 170.4V175.4L596.4 184z" fill="#e9eaec"/>
<path d="M588 170.4L599.4 164.6L608 169.8L596.4 176.4z" fill="url(#gPrB)" stroke="#3d78c8" stroke-width=".5"/>
<path d="M599.4 181.8L609.2 176.4L611.8 178.2L601.8 183.8z" fill="#e6e6e6" stroke="#8e969e" stroke-width=".7"/>
</g></svg></div></body></html>
